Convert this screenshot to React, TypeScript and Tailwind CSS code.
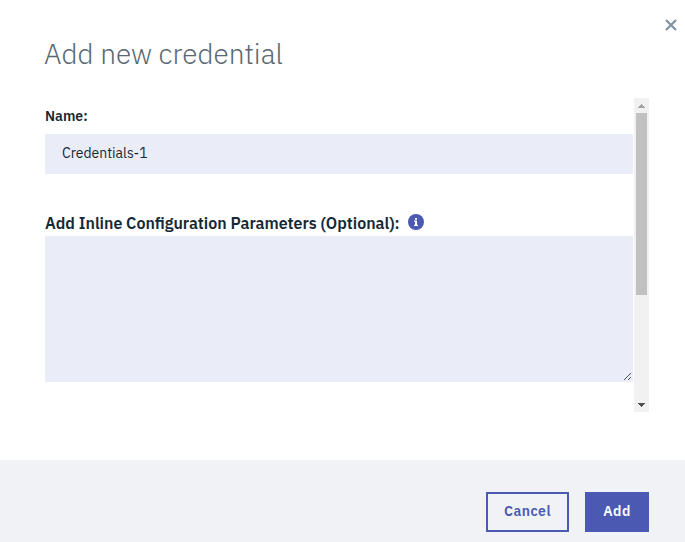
function InfoIcon() {
  return (
    <svg className="block h-4 w-4" viewBox="0 0 16 16" aria-label="More information">
      <circle cx="8" cy="8" r="8" fill="#4b59b3" />
      <path d="M7 4h2v1.7H7zM6 6.6h3v4.2h1V12H6v-1.2h1V7.8H6z" fill="#fff" />
    </svg>
  );
}

function Scrollbar() {
  return (
    <div className="flex w-[15px] shrink-0 flex-col items-center bg-[#f1f1f1]">
      <svg className="block h-[15px] w-[15px] shrink-0" viewBox="0 0 15 15" shapeRendering="crispEdges">
        <path d="M7 6h1v1h1v1h1v1h1v1H4V9h1V8h1V7h1z" fill="#a3a3a3" />
      </svg>
      <div className="h-[182px] w-[11px] bg-[#c1c1c1]" />
      <svg className="mt-auto block h-[15px] w-[15px] shrink-0" viewBox="0 0 15 15" shapeRendering="crispEdges">
        <path d="M4 6h7v1h-1v1H9v1H8v1H7V9H6V8H5V7H4z" fill="#505050" />
      </svg>
    </div>
  );
}

export default function App() {
  return (
    <div className="flex h-[542px] w-[685px] flex-col overflow-hidden bg-white font-['IBM_Plex_Sans',Roboto,sans-serif] text-[#152935]">
      <header className="flex h-[98px] shrink-0 justify-between pl-[44px] pr-2">
        <h1 className="pt-[36px] text-[28px] font-light leading-9 tracking-[-0.02px] text-[#5a6872]">Add new credential</h1>
        <button className="mt-[19px] h-3 w-3" aria-label="Close">
          <svg className="block h-3 w-3" viewBox="0 0 12 12">
            <path d="M1 1l10 10M11 1L1 11" stroke="#8493a0" strokeWidth="2.3" fill="none" />
          </svg>
        </button>
      </header>
      <main className="ml-[45px] flex h-[314px] w-[604px] shrink-0 justify-between">
        <form className="flex w-[588px] flex-col">
          <label className="h-9 pt-2 text-sm font-semibold leading-5">Name:</label>
          <div className="h-10 bg-[#eaedf7] pl-[17px] text-sm leading-[38px]">Credentials-1</div>
          <div className="mt-[38px] flex h-6 items-start gap-[9px]">
            <label className="w-[354px] whitespace-nowrap text-base font-semibold leading-[22px]">Add Inline Configuration Parameters (Optional):</label>
            <div className="pt-[2px]"><InfoIcon /></div>
          </div>
          <div className="flex h-[146px] items-end justify-end bg-[#eaedf7]">
            <svg className="block h-[11px] w-[11px]" viewBox="0 0 11 11" shapeRendering="crispEdges">
              <path d="M1.5 9.5l7-7M5.5 9.5l3-3" stroke="#50545b" fill="none" />
            </svg>
          </div>
        </form>
        <Scrollbar />
      </main>
      <footer className="mt-12 flex h-[82px] shrink-0 justify-end gap-4 bg-[#f0f2f6] pr-9 pt-8 text-sm font-semibold">
        <button className="h-10 w-[83px] border-2 border-[#4b59b3] pb-[2px] tracking-[0.5px] text-[#4b59b3]">Cancel</button>
        <button className="h-10 w-16 bg-[#4b59b3] pb-[2px] tracking-[0.5px] text-white">Add</button>
      </footer>
    </div>
  );
}
